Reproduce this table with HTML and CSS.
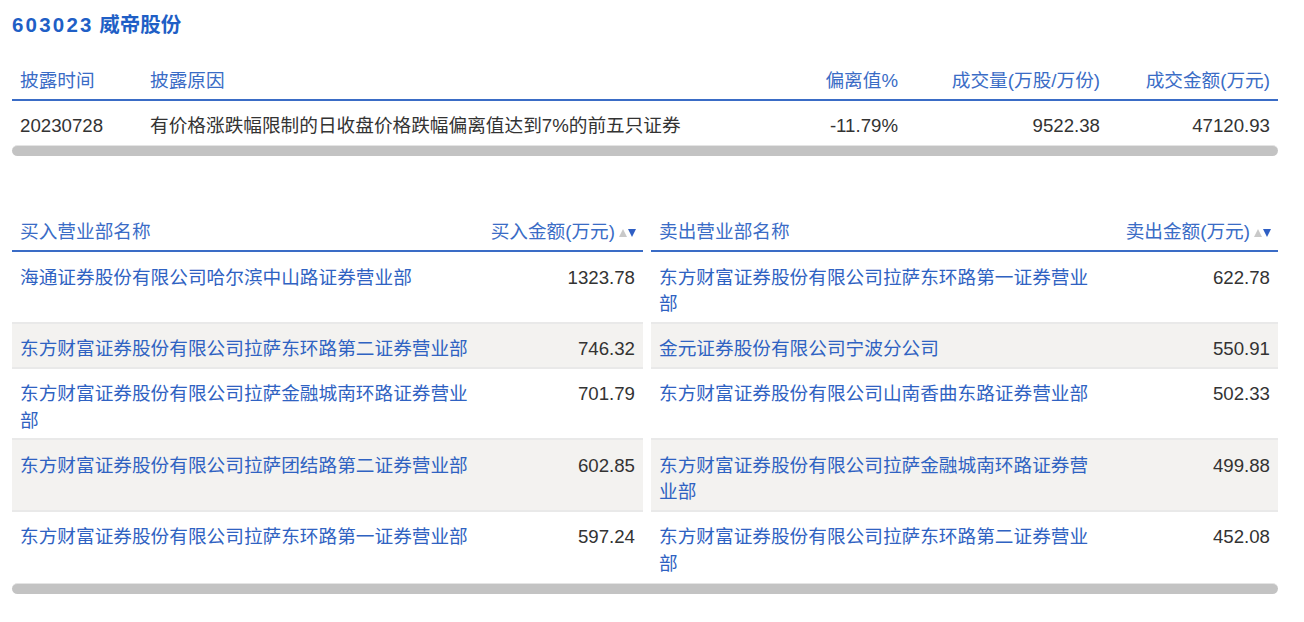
FILE: index.html
```html
<!DOCTYPE html>
<html lang="zh-CN">
<head>
<meta charset="utf-8">
<title>603023 威帝股份</title>
<link rel="stylesheet" href="styles.css">
</head>
<body>
<div class="page">
  <h1 class="title"><span class="code">603023</span> 威帝股份</h1>

  <div class="block">
    <table class="grid summary">
      <colgroup><col class="c-date"><col class="c-reason"><col class="c-dev"><col class="c-vol"><col class="c-amt"></colgroup>
      <thead>
        <tr><th>披露时间</th><th>披露原因</th><th class="r">偏离值%</th><th class="r">成交量(万股/万份)</th><th class="r">成交金额(万元)</th></tr>
      </thead>
      <tbody>
        <tr><td class="num">20230728</td><td class="plain">有价格涨跌幅限制的日收盘价格跌幅偏离值达到7%的前五只证券</td><td class="num r">-11.79%</td><td class="num r">9522.38</td><td class="num r">47120.93</td></tr>
      </tbody>
    </table>
    <div class="scrollbar"></div>
  </div>

  <div class="block second">
    <table class="grid trades">
      <colgroup><col class="c-name-l"><col class="c-money-l"><col class="c-gap"><col class="c-name-r"><col class="c-money-r"></colgroup>
      <thead>
        <tr>
          <th>买入营业部名称</th>
          <th class="r money-h">买入金额(万元)<span class="sort"><svg width="8" height="8" viewBox="0 0 8 8"><path d="M0 8 L4 0 L8 8 Z" fill="#c9c9c9"/></svg><svg width="8" height="8" viewBox="0 0 8 8"><path d="M0 0 L8 0 L4 8 Z" fill="#2f5fc4"/></svg></span></th>
          <th class="gap"></th>
          <th>卖出营业部名称</th>
          <th class="r money-h">卖出金额(万元)<span class="sort"><svg width="8" height="8" viewBox="0 0 8 8"><path d="M0 8 L4 0 L8 8 Z" fill="#c9c9c9"/></svg><svg width="8" height="8" viewBox="0 0 8 8"><path d="M0 0 L8 0 L4 8 Z" fill="#2f5fc4"/></svg></span></th>
        </tr>
      </thead>
      <tbody>
        <tr>
          <td class="link">海通证券股份有限公司哈尔滨中山路证券营业部</td><td class="num r">1323.78</td><td class="gap"></td>
          <td class="link">东方财富证券股份有限公司拉萨东环路第一证券营业部</td><td class="num r">622.78</td>
        </tr>
        <tr class="alt">
          <td class="link">东方财富证券股份有限公司拉萨东环路第二证券营业部</td><td class="num r">746.32</td><td class="gap"></td>
          <td class="link">金元证券股份有限公司宁波分公司</td><td class="num r">550.91</td>
        </tr>
        <tr>
          <td class="link">东方财富证券股份有限公司拉萨金融城南环路证券营业部</td><td class="num r">701.79</td><td class="gap"></td>
          <td class="link">东方财富证券股份有限公司山南香曲东路证券营业部</td><td class="num r">502.33</td>
        </tr>
        <tr class="alt">
          <td class="link">东方财富证券股份有限公司拉萨团结路第二证券营业部</td><td class="num r">602.85</td><td class="gap"></td>
          <td class="link">东方财富证券股份有限公司拉萨金融城南环路证券营业部</td><td class="num r">499.88</td>
        </tr>
        <tr>
          <td class="link">东方财富证券股份有限公司拉萨东环路第一证券营业部</td><td class="num r">597.24</td><td class="gap"></td>
          <td class="link">东方财富证券股份有限公司拉萨东环路第二证券营业部</td><td class="num r">452.08</td>
        </tr>
      </tbody>
    </table>
    <div class="scrollbar"></div>
  </div>
</div>
</body>
</html>
```

FILE: styles.css
```css
html, body {
  margin: 0;
  padding: 0;
  background: #ffffff;
}

body {
  font-family: "Liberation Sans", "Noto Sans CJK SC", sans-serif;
  font-size: 18.67px;
  line-height: 26px;
  color: #333333;
}

.page {
  padding: 12px 26px 0 12px;
}

.title {
  margin: 0;
  font-size: 20.5px;
  line-height: 26px;
  font-weight: bold;
  color: #1f5fc6;
}

.title .code {
  letter-spacing: 2.2px;
}

.block {
  margin-top: 18px;
}

.block.second {
  margin-top: 51px;
}

.grid {
  border-collapse: collapse;
  border-spacing: 0;
  table-layout: fixed;
  width: 100%;
}

.grid th {
  font-weight: normal;
  text-align: left;
  color: #3a6cc6;
  padding: 12px 8px 5px 8px;
  border-bottom: 2px solid #3a6cc6;
  white-space: nowrap;
}

.grid td {
  padding: 12px 8px 6px 8px;
  vertical-align: top;
}

.grid .r {
  text-align: right;
}

.c-date { width: 130px; }
.c-dev { width: 120px; }
.c-vol { width: 202px; }
.c-amt { width: 170px; }

.num {
  color: #333333;
}

.plain {
  color: #333333;
}

.link {
  color: #2f62c2;
}

.c-name-l { width: 470px; }
.c-money-l { width: 161px; }
.c-gap { width: 8px; }
.c-name-r { width: 449px; }
.c-money-r { width: 178px; }

.trades td {
  line-height: 26.5px;
  padding: 12.5px 8px 4px 8px;
}

.trades th.gap,
.trades td.gap {
  padding: 0;
  border: none;
  background: #ffffff;
}

.trades tbody td {
  border-bottom: 2px solid #e9e9e9;
}

.trades tbody td.gap {
  border-bottom: none;
}

.trades tbody tr:last-child td {
  border-bottom: none;
  padding-bottom: 6px;
}

.trades tr.alt td {
  background: #f3f2f0;
}

.trades tr.alt td.gap {
  background: #ffffff;
}

.trades th.money-h {
  padding-right: 7px;
}

.sort {
  display: inline-flex;
  align-items: center;
  gap: 1px;
  margin-left: 4px;
  vertical-align: 1px;
}

.sort svg {
  display: block;
}

.scrollbar {
  height: 10px;
  border-top: 1px solid #e4e4e4;
  background: #c3c3c3;
  border-radius: 6px;
}
```
